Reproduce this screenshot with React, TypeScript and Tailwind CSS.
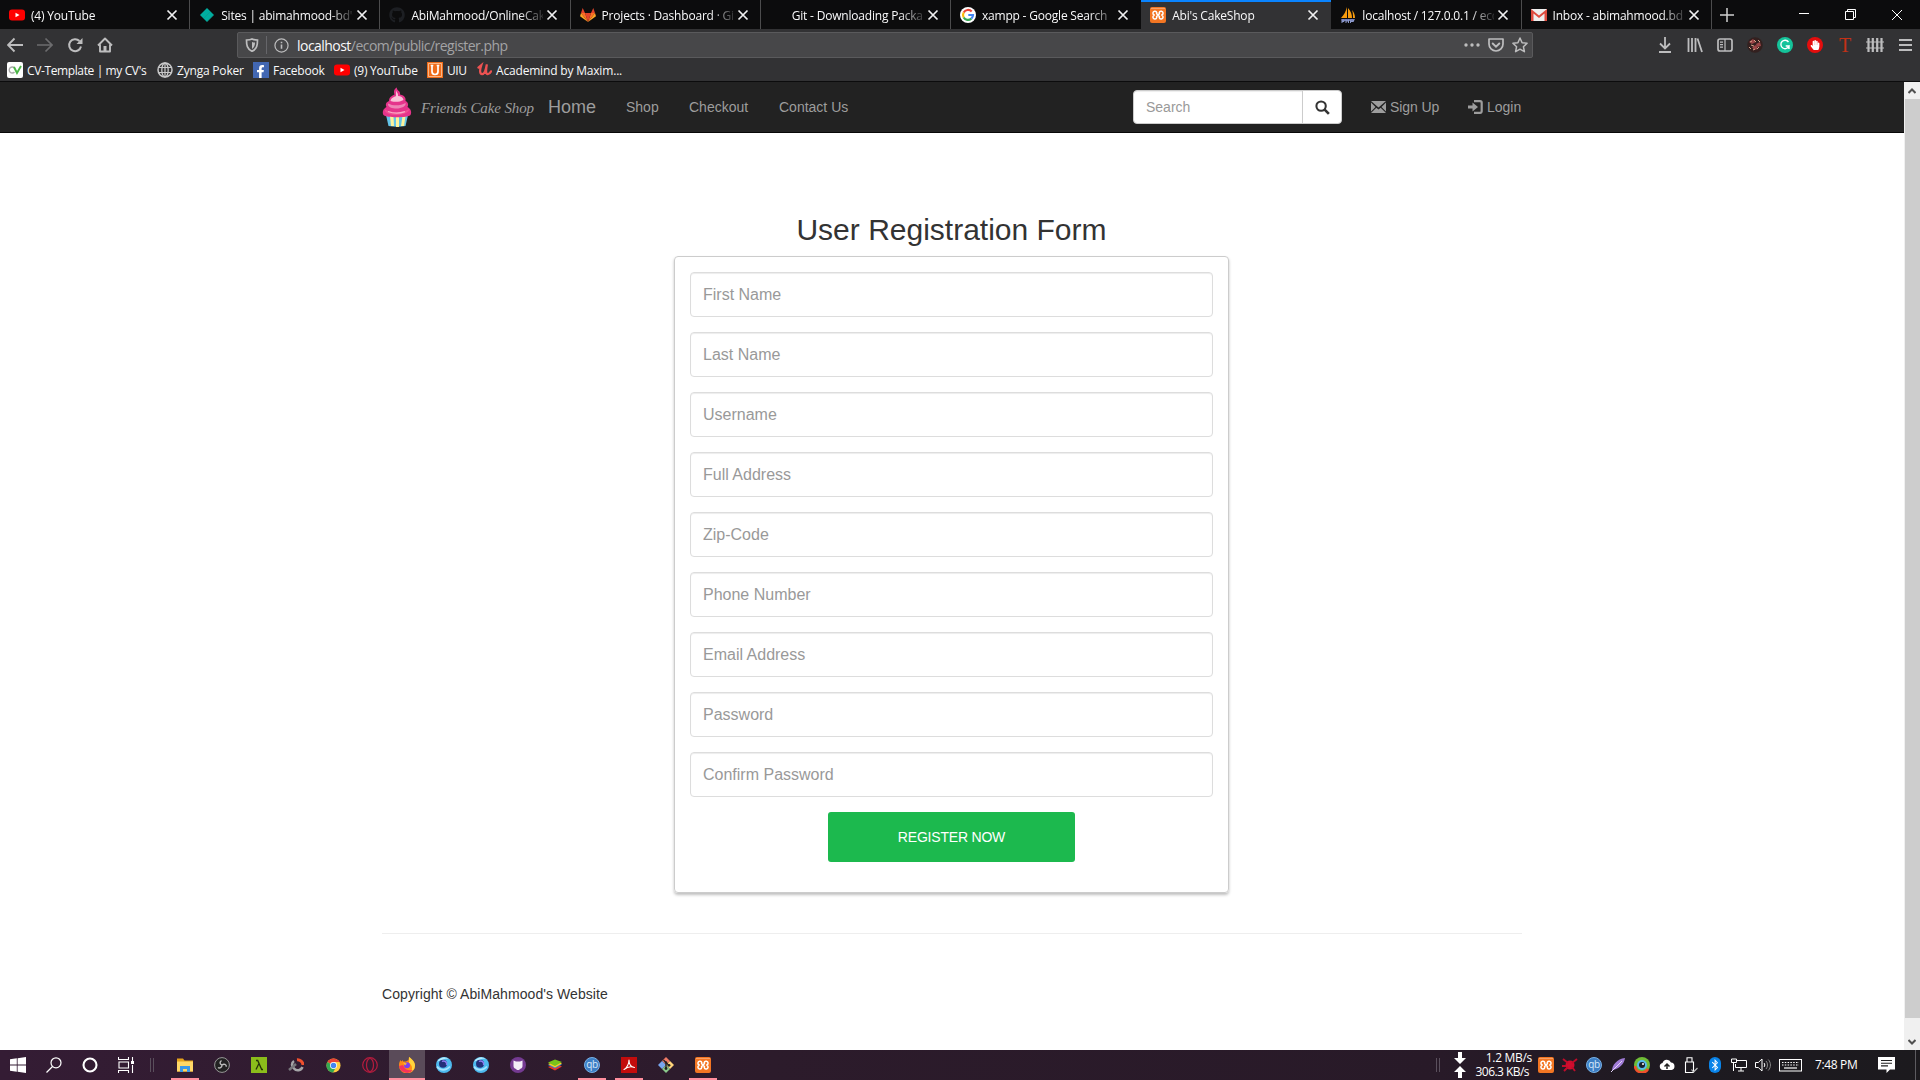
import React from "react";
import { FaGithub, FaBluetoothB, FaFacebookF, FaHandPaper } from "react-icons/fa";

type Kids = { children?: React.ReactNode };

function Svg({ w = 16, h, box, children }: Kids & { w?: number; h?: number; box?: string }) {
  return (
    <svg width={w} height={h ?? w} viewBox={box ?? "0 0 16 16"} fill="none" className="block shrink-0">
      {children}
    </svg>
  );
}

/* ---------- favicons ---------- */
const YouTube = () => (
  <Svg>
    <rect x="0" y="2.5" width="16" height="11" rx="3" fill="#f00" />
    <path d="M6.5 5.7v4.6l4-2.3z" fill="#fff" />
  </Svg>
);
const Diamond = () => (
  <Svg>
    <path d="M8 1l7 7-7 7-7-7z" fill="#00ad9f" />
    <path d="M5 11l6-6M8 14l6-6" stroke="#0b978d" strokeWidth=".6" />
  </Svg>
);
const Gitlab = () => (
  <Svg>
    <path d="M8 15L5 6h6z" fill="#e24329" />
    <path d="M8 15L5 6H1z M8 15l3-9h4z" fill="#fc6d26" />
    <path d="M8 15L1 6 0 9.2z M8 15l7-9 1 3.200z" fill="#fca326" />
    <path d="M1 6l1.700-5L5 6zM15 6l-1.700-5L11 6z" fill="#e24329" />
  </Svg>
);
const GoogleG = () => (
  <Svg>
    <circle cx="8" cy="8" r="8" fill="#fff" />
    <path d="M11.700 4.500A5 5 0 0 0 3.700 5.500" stroke="#ea4335" strokeWidth="2.200" />
    <path d="M3.700 5.500a5 5 0 0 0 0 5" stroke="#fbbc05" strokeWidth="2.200" />
    <path d="M3.700 10.500a5 5 0 0 0 7.600 1.200" stroke="#34a853" strokeWidth="2.200" />
    <path d="M11.300 11.700A5 5 0 0 0 13 8H8.300" stroke="#4285f4" strokeWidth="2.200" />
  </Svg>
);
const Xampp = () => (
  <Svg>
    <rect width="16" height="16" rx="2" fill="#f37623" />
    <path d="M1 1.500h14" stroke="#f9b384" strokeWidth=".7" />
    <path
      d="M6.700 6.300V5.500a1.600 1.600 0 0 0-1.600-1.300h-.5a1.900 1.900 0 0 0-.6 3.600v.6a1.900 1.900 0 0 0 .6 3.600h.5a1.600 1.600 0 0 0 1.600-1.300V9.800M9.300 6.300V5.500a1.600 1.600 0 0 1 1.600-1.300h.5a1.900 1.900 0 0 1 .6 3.600v.6a1.900 1.900 0 0 1-.6 3.600h-.5a1.600 1.600 0 0 1-1.600-1.300V9.800M6.200 6.300l3.600 3.600M9.800 6.300L6.200 9.900"
      stroke="#fff"
      strokeWidth="1.500"
    />
  </Svg>
);
const PhpMyAdmin = () => (
  <Svg>
    <path d="M7 0v11H1C4 8 6 4 7 0zM8 1c3 3 4 7 4 10H8zM12 3c2 2 3 5 3 8h-2c0-3 0-5-1-8z" fill="#f89c0e" />
    <path d="M1 12h14l-1 2H2z" fill="#6c78af" />
    <path d="M2 16v-3h2v1.500H2M6 12.500V16M6 14h2.500M8.500 12.500V16M10.500 16v-3h3v1.500h-3" stroke="#8d99cc" />
  </Svg>
);
const Gmail = () => (
  <Svg>
    <path d="M0 2h16v12H0z" fill="#eee" />
    <path d="M0 2l8 6.500L16 2v12h-2.500V6.500L8 11 2.500 6.500V14H0z" fill="#dd4b3e" />
  </Svg>
);

/* ---------- tab strip ---------- */
type Tab = { title: string; icon: React.ReactNode; active?: boolean; edge?: boolean };
const tabs: Tab[] = [
  { title: "(4) YouTube", icon: <YouTube />, edge: true },
  { title: "Sites | abimahmood-bd's", icon: <Diamond />, edge: true },
  { title: "AbiMahmood/OnlineCak", icon: <FaGithub className="size-4 text-[#1d1f23]" />, edge: true },
  { title: "Projects · Dashboard · Git", icon: <Gitlab />, edge: true },
  { title: "Git - Downloading Packa", icon: <span className="size-4" />, edge: true },
  { title: "xampp - Google Search", icon: <GoogleG /> },
  { title: "Abi's CakeShop", icon: <Xampp />, active: true },
  { title: "localhost / 127.0.0.1 / eco", icon: <PhpMyAdmin />, edge: true },
  { title: "Inbox - abimahmood.bd", icon: <Gmail />, edge: true },
];

function TabStrip() {
  return (
    <div className="flex h-[29px] bg-[#0c0c0d]">
      {tabs.map((t) => (
        <div
          key={t.title}
          className={
            "flex w-[190.2px] shrink-0 items-center pl-[9px] " +
            (t.active ? "border-t-2 border-[#0a84ff] bg-[#323234] pb-0.5 " : "pt-px ") +
            (t.edge ? "border-r border-r-[#4c4c4d]" : "")
          }
        >
          {t.icon}
          <span className="ml-1.5 w-[132px] overflow-hidden whitespace-nowrap pt-0.5 text-[12px] leading-5 tracking-[-0.2px] text-[#f9f9fa] [mask-image:linear-gradient(to_right,#000_108px,transparent_136px)]">
            {t.title}
          </span>
          <span className="ml-[3px]">
            <Svg w={12} box="0 0 12 12">
              <path d="M1.500 1.500l9 9M10.500 1.500l-9 9" stroke="#f0f0f1" strokeWidth="1.700" />
            </Svg>
          </span>
        </div>
      ))}
      <div className="flex flex-1 items-center pl-2">
        <Svg w={14} box="0 0 14 14">
          <path d="M7 0v14M0 7h14" stroke="#d0d0d0" strokeWidth="1.500" />
        </Svg>
        <div className="ml-auto flex items-center gap-[35px] pr-[17px]">
          <Svg w={11} box="0 0 11 11">
            <path d="M0 4.500h10" stroke="#fff" />
          </Svg>
          <Svg w={11} box="0 0 11 11">
            <path d="M.5 2.500h8v8h-8zM2.500 2.500v-2h8v8h-2" stroke="#fff" />
          </Svg>
          <Svg w={12} box="0 0 12 12">
            <path d="M1 1l10 10M11 1L1 11" stroke="#fff" />
          </Svg>
        </div>
      </div>
    </div>
  );
}

/* ---------- navigation toolbar ---------- */
function Slot({ children, w }: Kids & { w: string }) {
  return <span className={"flex shrink-0 items-center justify-center " + w}>{children}</span>;
}

function Toolbar() {
  const s = "#bdbdbe";
  return (
    <div className="flex h-[29px] items-start pt-[3px]">
      <div className="flex h-[26px] w-[237px] shrink-0 items-center">
        <Slot w="w-[30px]">
          <Svg>
            <path d="M16 8H1.500M7.500 1.500L1 8l6.500 6.500" stroke={s} strokeWidth="1.900" />
          </Svg>
        </Slot>
        <Slot w="w-[30px]">
          <Svg>
            <path d="M0 8h14.500M8.500 1.500L15 8l-6.500 6.500" stroke="#6c6c6e" strokeWidth="1.700" />
          </Svg>
        </Slot>
        <Slot w="w-[30px]">
          <Svg>
            <path d="M14 9.500A6 6 0 1 1 12.500 4" stroke={s} strokeWidth="2" />
            <path d="M15.500 1v6h-6z" fill={s} />
          </Svg>
        </Slot>
        <Slot w="w-[30px]">
          <Svg>
            <path d="M1 8.500L8 1.500l7 7M3 7.500v7h10v-7" stroke={s} strokeWidth="1.900" strokeLinejoin="round" />
            <path d="M6.500 9h3v5.500h-3z" fill={s} />
          </Svg>
        </Slot>
      </div>
      <div className="flex h-[26px] w-[1296px] shrink-0 items-center rounded-[2px] border border-[#5a5a5c] bg-[#474749]">
        <Slot w="w-[28px]">
          <Svg w={14} box="0 0 14 14">
            <path d="M7 1c2 1 4 1 5.500 1 0 5-.5 9-5.500 11.300C2 11 1.500 7 1.500 2 3 2 5 2 7 1z" stroke={s} strokeWidth="1.700" />
            <path d="M7 4c1 .5 2 .5 3 .5 0 3-.8 5-3 6.500z" fill={s} />
          </Svg>
        </Slot>
        <span className="h-[18px] w-px bg-[#66666a]" />
        <Slot w="w-[29px]">
          <Svg w={15}>
            <circle cx="8" cy="8" r="7" stroke={s} strokeWidth="1.300" />
            <path d="M8 7v4.500M8 4v1.700" stroke={s} strokeWidth="1.700" />
          </Svg>
        </Slot>
        <span className="pl-px pt-0.5 text-[14px] leading-6 tracking-[-0.54px] text-[#a3a3a5]">
          <span className="text-[#f9f9fa]">localhost</span>/ecom/public/register.php
        </span>
        <div className="ml-auto flex items-center">
          <Slot w="w-[24px]">
            <Svg>
              <circle cx="2" cy="8" r="1.700" fill={s} />
              <circle cx="8" cy="8" r="1.700" fill={s} />
              <circle cx="14" cy="8" r="1.700" fill={s} />
            </Svg>
          </Slot>
          <Slot w="w-[24px]">
            <Svg>
              <path d="M1 2h14v5a7 7 0 0 1-14 0z" stroke={s} strokeWidth="1.700" strokeLinejoin="round" />
              <path d="M4.700 6.500L8 9.700l3.300-3.200" stroke={s} strokeWidth="1.900" strokeLinecap="round" />
            </Svg>
          </Slot>
          <Slot w="w-[24px]">
            <Svg>
              <path d="M8 1l2.100 4.700 5 .5-3.700 3.500 1 5L8 12.200 3.600 14.700l1-5L.9 6.200l5-.5z" stroke={s} strokeWidth="1.500" strokeLinejoin="round" />
            </Svg>
          </Slot>
        </div>
      </div>
      <div className="flex h-[26px] flex-1 items-center justify-end">
        <Slot w="w-[30px]">
          <Svg>
            <path d="M8 0v11M3 6.500L8 11.500l5-5M2 15h12" stroke={s} strokeWidth="1.800" />
          </Svg>
        </Slot>
        <Slot w="w-[30px]">
          <Svg>
            <path d="M1.500 1v14M5 1v14M8.500 1v14M10.500 1.500L15 15" stroke={s} strokeWidth="1.800" />
          </Svg>
        </Slot>
        <Slot w="w-[30px]">
          <Svg>
            <rect x="1" y="2" width="14" height="12" rx="2" stroke={s} strokeWidth="1.700" />
            <path d="M8 2v12M3 5.200h3M3 7.700h3M3 10.200h3" stroke={s} strokeWidth="1.200" />
          </Svg>
        </Slot>
        <Slot w="w-[30px]">
          <Svg>
            <circle cx="8" cy="8" r="7.800" fill="#33201f" />
            <path d="M2 5l4-3 3 3-4 2zM9 7l4-2 1 4-4 1zM5 10l4-2 2 4-4 1z" fill="#9b4547" />
            <path d="M7 3l2 2M4 8l3 1M11 3l2 2M6 13l2-1M3 5l2-1M10 12l2-2M2 10l2 2" stroke="#d4a087" />
          </Svg>
        </Slot>
        <Slot w="w-[30px]">
          <Svg>
            <circle cx="8" cy="8" r="8" fill="#15c39a" />
            <path d="M11.500 5A4.200 4.200 0 1 0 12 9H8.700M12 8.500V12" stroke="#fff" strokeWidth="1.400" />
          </Svg>
        </Slot>
        <Slot w="w-[30px]">
          <span className="flex size-4 items-center justify-center rounded-full bg-[#e40d0d]">
            <FaHandPaper className="size-2.5 text-white" />
          </span>
        </Slot>
        <Slot w="w-[30px]">
          <span className="font-['Liberation_Serif',serif] text-[20px] leading-6 text-[#c33116]">T</span>
        </Slot>
        <Slot w="w-[30px]">
          <Svg w={18} h={16} box="0 0 18 16">
            <path d="M2.500 1v14M6.800 1v14M11.200 1v14M15.500 1v14" stroke={s} strokeWidth="2.200" />
            <path d="M0 5h18M0 11h18" stroke={s} strokeWidth="1.100" />
          </Svg>
        </Slot>
        <Slot w="w-[30px]">
          <Svg w={13} h={16} box="0 0 13 16">
            <path d="M0 3h13M0 8h13M0 13h13" stroke={s} strokeWidth="1.800" />
          </Svg>
        </Slot>
      </div>
    </div>
  );
}

const bookmarks = [
  {
    label: "CV-Template | my CV's",
    w: "w-[150px] tracking-[-0.38px]",
    icon: (
      <Svg>
        <rect width="16" height="16" rx="2" fill="#fff" />
        <path d="M7.500 6A3 3 0 1 0 7.500 10" stroke="#aaa" strokeWidth="1.400" />
        <path d="M7 5l3 6 4-7" stroke="#4cb648" strokeWidth="1.900" />
      </Svg>
    ),
  },
  {
    label: "Zynga Poker",
    w: "w-[96px] tracking-[-0.2px]",
    icon: (
      <Svg>
        <circle cx="8" cy="8" r="7" stroke="#c8c8c9" strokeWidth="1.500" />
        <ellipse cx="8" cy="8" rx="3.200" ry="7" stroke="#c8c8c9" strokeWidth="1.300" />
        <path d="M1.500 5.500h13M1.500 10.500h13M8 1v14" stroke="#c8c8c9" strokeWidth="1.200" />
      </Svg>
    ),
  },
  {
    label: "Facebook",
    w: "w-[81px] tracking-[-0.25px]",
    icon: (
      <span className="flex size-4 shrink-0 items-end justify-end bg-[#4267b2] pr-0.5">
        <FaFacebookF className="size-[13px] text-white" />
      </span>
    ),
  },
  { label: "(9) YouTube", w: "w-[93px] tracking-[-0.25px]", icon: <YouTube /> },
  {
    label: "UIU",
    w: "w-[50px] tracking-[-0.4px]",
    icon: (
      <Svg>
        <rect width="16" height="16" fill="#ef6c1a" />
        <path d="M1.500 1.500h13v13h-13z" stroke="#ffd9b8" strokeWidth=".7" />
        <path d="M5 3v6.500a3 3 0 0 0 6 0V3M3.700 3.500h2.600M9.700 3.500h2.600" stroke="#fff" strokeWidth="1.700" />
      </Svg>
    ),
  },
  {
    label: "Academind by Maxim...",
    w: "w-[200px] tracking-[-0.18px]",
    icon: (
      <Svg w={15}>
        <path d="M1.500 6l3-2.500C3 8 2.500 13 5.500 13c2.500 0 4-5 5-10.500C9.500 8 9 13 11.500 13c1.500 0 2.500-1 3.500-3" stroke="#ec5252" strokeWidth="2.400" strokeLinecap="round" />
      </Svg>
    ),
  },
];

function Bookmarks() {
  return (
    <div className="flex h-[23px] items-center pl-[7px]">
      {bookmarks.map((b) => (
        <div key={b.label} className={"flex shrink-0 items-center gap-1 whitespace-nowrap text-[12px] leading-4 text-[#f9f9fa] " + b.w}>
          {b.icon}
          <span className="pt-0.5">{b.label}</span>
        </div>
      ))}
    </div>
  );
}

/* ---------- page ---------- */
function Cupcake() {
  return (
    <Svg w={30} h={40} box="0 0 30 40">
      <path d="M4 28h22l-2.500 11a14 3 0 0 1-17 0z" fill="#63c4e8" />
      <path d="M8 29l1 10h3l-.5-10zM14 29h3v11h-3zM20.500 29h3l-1.500 10h-3z" fill="#fdf29a" />
      <path d="M15 .5c-1 3 4 3 3 7 5 1 6 4 5.500 6.500 3 1.500 3 4 2 6C29 22 30 25 28.500 28c-2 3-25 3-27 0C0 25 1 22 4.500 20c-1.500-3 0-5 2.500-6C7 10 10 9 12.500 7.500 11.500 4 12 2 15 .5z" fill="#e5348b" />
      <path d="M14 3c0 2 2.500 3 2 6 3 0 5 1.500 5.500 4-4 2-8 2.500-13 1C9 11 12 10 14 9z" fill="#f9c3d8" />
      <path d="M6 16.500c6 3 13 2 17.500-.5 1 3-4 5.500-9 5.500-4 0-9-1-8.500-5z" fill="#ee85b6" />
      <path d="M3 22.500c7 4 17 3.500 24-.5 1 2.500-5 6-12 6s-13-2-12-5.500z" fill="#f04f92" />
      <path d="M6 24.500c5 2 12 2 17 .2" stroke="#f9a9c8" strokeWidth="1.300" />
    </Svg>
  );
}

function SiteNav() {
  return (
    <nav className="h-[51px] border-b border-[#080808] bg-[#222]">
      <div className="mx-auto flex h-[50px] w-[1140px] items-center text-[14px] leading-5 text-[#9d9d9d]">
        <Cupcake />
        <span className="ml-[9px] w-[127px] whitespace-nowrap pt-0.5 font-['Liberation_Serif',serif] text-[15px] italic tracking-[-0.12px]">
          Friends Cake Shop
        </span>
        <span className="w-[78px] text-[18px]">Home</span>
        <span className="w-[63px]">Shop</span>
        <span className="w-[90px]">Checkout</span>
        <span>Contact Us</span>
        <div className="ml-auto flex h-[34px] w-[209px] overflow-hidden rounded-[4px] border border-[#ccc] bg-white">
          <div className="flex flex-1 items-center pl-3 text-[#999] shadow-[inset_0_1px_1px_rgba(0,0,0,0.075)]">Search</div>
          <div className="flex w-[39px] items-center justify-center border-l border-[#ccc]">
            <Svg w={15} h={15}>
              <circle cx="6.500" cy="6.500" r="5" stroke="#333" strokeWidth="2.200" />
              <path d="M10 10l4.800 4.800" stroke="#333" strokeWidth="2.800" />
            </Svg>
          </div>
        </div>
        <div className="ml-[29px] flex w-[97px] items-center gap-1">
          <Svg w={15} h={12} box="0 0 15 12">
            <path d="M0 0h15L7.500 6.500zM0 1.500L4.500 6 0 10.500zM15 1.500L10.500 6l4.500 4.500zM0 12l5.300-5.300L7.500 8.500l2.200-1.800L15 12z" fill="#9d9d9d" />
          </Svg>
          <span className="tracking-[-0.1px]">Sign Up</span>
        </div>
        <div className="flex w-[54px] items-center gap-1 whitespace-nowrap">
          <Svg w={15} h={14} box="0 0 15 14">
            <path d="M6 1.200h6.200a1.500 1.500 0 0 1 1.500 1.500v8.600a1.500 1.500 0 0 1-1.500 1.500H6" stroke="#9d9d9d" strokeWidth="2.200" />
            <path d="M0 5.500h4.500V2.500L10 7l-5.500 4.500v-3H0z" fill="#9d9d9d" />
          </Svg>
          <span>Login</span>
        </div>
      </div>
    </nav>
  );
}

const fields = ["First Name", "Last Name", "Username", "Full Address", "Zip-Code", "Phone Number", "Email Address", "Password", "Confirm Password"];

function Page() {
  return (
    <main className="w-[1904px] bg-white font-['Liberation_Sans',Arial,sans-serif] text-[#333]">
      <SiteNav />
      <h2 className="mt-[80px] pr-px text-center text-[30px] leading-[33px]">User Registration Form</h2>
      <form className="ml-[674px] mt-2.5 h-[637px] w-[555px] rounded-[4px] border border-[#ccc] p-[15px] shadow-[0_2px_3px_rgba(0,0,0,0.25)]">
        <div className="flex flex-col gap-[15px]">
          {fields.map((f) => (
            <div key={f} className="flex h-[45px] items-center rounded-[4px] border border-[#ddd] pl-3 text-[16px] text-[#999] shadow-[inset_0_1px_1px_rgba(0,0,0,0.075)]">
              {f}
            </div>
          ))}
        </div>
        <div className="mx-auto mt-[15px] flex h-[50px] w-[247px] items-center justify-center rounded-[3px] bg-[#1cb94e] text-[14px] tracking-[-0.2px] text-white">
          REGISTER NOW
        </div>
      </form>
      <footer className="mx-auto mt-10 w-[1140px] border-t border-[#eee] pt-[50px] text-[14px] leading-5 tracking-[0.07px]">
        Copyright © AbiMahmood's Website
      </footer>
    </main>
  );
}

function Scrollbar() {
  return (
    <div className="flex w-4 flex-col items-center justify-between bg-[#f0f0f0]">
      <div className="flex h-[17px] items-center">
        <Svg w={8} h={6} box="0 0 8 6">
          <path d="M.5 5L4 1.500 7.500 5" stroke="#505050" strokeWidth="2" />
        </Svg>
      </div>
      <div className="mb-[15px] w-[15px] flex-1 bg-[#cdcdcd]" />
      <div className="flex h-[17px] items-center">
        <Svg w={8} h={6} box="0 0 8 6">
          <path d="M.5 1L4 4.500 7.500 1" stroke="#505050" strokeWidth="2" />
        </Svg>
      </div>
    </div>
  );
}

/* ---------- taskbar ---------- */
const Swirl = () => (
  <Svg>
    <circle cx="8" cy="8" r="8" fill="#4db9ee" />
    <path d="M1 4.500A8 8 0 0 1 13 2c-3-.5-5 0-6 1z" fill="#b5ecff" />
    <circle cx="7" cy="6.800" r="4" fill="#233079" />
    <path d="M6 4.500a3 3 0 0 1 4.500 3.500" stroke="#8f7df0" strokeWidth="1.400" />
    <path d="M1 9.500c3 4.500 9 4.500 13 0" stroke="#a4e4ff" strokeWidth="1.700" />
  </Svg>
);
const Qb = () => (
  <span className="flex size-4 shrink-0 items-center justify-center rounded-full border border-[#78b0e4] bg-[#3d7ec4] text-[10px] leading-3 tracking-tight text-[#d7e9fa]">
    <span className="pb-0.5">qb</span>
  </span>
);

type TaskApp = { name: string; icon: React.ReactNode; open?: boolean; focused?: boolean };
const apps: TaskApp[] = [
  {
    name: "explorer",
    open: true,
    icon: (
      <Svg>
        <path d="M0 1.500h6l1.500 2H16v11H0z" fill="#e5a21b" />
        <path d="M0 4.500h16v10H0z" fill="#ffd767" />
        <path d="M3 15V9h10v6h-3v-3H6v3z" fill="#3a98e8" />
      </Svg>
    ),
  },
  {
    name: "obs",
    icon: (
      <Svg>
        <circle cx="8" cy="8" r="7.400" fill="#222" stroke="#999" strokeWidth="1" />
        <path d="M8 8C5.500 7 5.500 5 7.500 3.500M8 8c2-1.500 4.500-.5 4.300 1.800M8 8c0 2.500-2.500 3.700-4 2.500" stroke="#bbb" strokeWidth="1.400" />
      </Svg>
    ),
  },
  {
    name: "lambda",
    icon: (
      <Svg>
        <rect width="16" height="16" fill="#8bbd1b" />
        <path d="M5 3.500h1.700l4 9H12M7.700 7L5 12.500" stroke="#243209" strokeWidth="1.300" />
      </Svg>
    ),
  },
  {
    name: "gauge",
    icon: (
      <Svg>
        <path d="M9 2.700A5.500 5.500 0 0 1 15 8" stroke="#f0502e" strokeWidth="3" />
        <path d="M14.500 10A5 5 0 0 1 6 11.500 4.500 4.500 0 0 1 6 4" stroke="#a5a5a8" strokeWidth="2.500" />
        <path d="M8 7L1 13" stroke="#77777b" strokeWidth="2.500" />
      </Svg>
    ),
  },
  {
    name: "chrome",
    icon: (
      <Svg w={15}>
        <circle cx="8" cy="8" r="7.500" fill="#ffcd40" />
        <path d="M8 8L1.500 4.200A7.500 7.500 0 0 1 14.500 4.200H8z" fill="#ea4335" />
        <path d="M1.500 4.200A7.500 7.500 0 0 0 7.500 15.500L10.500 10 8 8z" fill="#34a853" />
        <circle cx="8" cy="8" r="3.700" fill="#fff" />
        <circle cx="8" cy="8" r="2.900" fill="#4285f4" />
      </Svg>
    ),
  },
  {
    name: "opera",
    icon: (
      <Svg>
        <circle cx="8" cy="8" r="7.300" stroke="#b51c3e" strokeWidth="1.200" />
        <ellipse cx="8" cy="8" rx="3.500" ry="6.500" stroke="#b51c3e" strokeWidth="1.200" />
      </Svg>
    ),
  },
  {
    name: "firefox",
    open: true,
    focused: true,
    icon: (
      <Svg>
        <path d="M1.500 3l1 1.500L4 3v1.500h3L9.500 3 10 0c3 2 6 5 6 8.500a7.700 7.700 0 0 1-16 0C0 6 .5 5 1.500 3z" fill="#ff8a16" />
        <path d="M10 0c3 2 6 5 6 8.500A7.700 7.700 0 0 1 12 15c2-4 1-7-2-9V0z" fill="#ffd53c" />
        <path d="M0 9a8 8 0 0 0 14 4c-4 1-8 0-10-5z" fill="#f7345b" />
        <circle cx="8" cy="8.300" r="3" fill="#7b3ff0" />
        <path d="M4 5.500l4 1-2 2z" fill="#ffbb27" />
      </Svg>
    ),
  },
  { name: "swirl-a", icon: <Swirl /> },
  { name: "swirl-b", icon: <Swirl /> },
  {
    name: "github",
    icon: (
      <Svg>
        <circle cx="8" cy="8" r="8" fill="#743a91" />
        <path d="M3.500 3.500l2.500 1h4l2.500-1v5.700c0 2-2 2.800-4.500 2.800s-4.500-.8-4.500-2.800z" fill="#f3eef7" />
        <path d="M6.500 11.500h3V13h-3z" fill="#f3eef7" />
      </Svg>
    ),
  },
  {
    name: "stacks",
    icon: (
      <Svg>
        <path d="M1 10l8-3 6 2.500-7 4z" fill="#e5382a" />
        <path d="M1 8l8-3 6 2.500-7 4z" fill="#2f87d8" />
        <path d="M1 7l8-3 6 2.500-7 4z" fill="#fdd023" />
        <path d="M1 5.500l7-3 7 2.500-7 4z" fill="#79c31b" />
      </Svg>
    ),
  },
  { name: "qb", icon: <Qb />, open: true },
  {
    name: "acrobat",
    open: true,
    icon: (
      <Svg>
        <rect width="16" height="16" fill="#c30c0c" />
        <path d="M3 12.500c3-1.500 5-6 5-9.500 0 4 2 7 5.500 7.500C10 9 6 10 3 12.500z" stroke="#fff" strokeWidth="1.100" strokeLinejoin="round" />
      </Svg>
    ),
  },
  {
    name: "git",
    icon: (
      <Svg>
        <path d="M8 0l4 4-4 4-4-4z" fill="#ef7b66" />
        <path d="M12 4l4 4-4 4-4-4z" fill="#ffd47a" />
        <path d="M4 4l4 4-4 4-4-4z" fill="#78a6ee" />
        <path d="M8 8l4 4-4 4-4-4z" fill="#8ac98b" />
        <path d="M5.500 3l5 5M8 5.500V12" stroke="#222" strokeWidth="1.300" />
        <circle cx="8" cy="5.500" r="1.200" fill="#222" />
        <circle cx="8" cy="11.500" r="1.400" fill="#222" />
        <circle cx="11" cy="8.300" r="1.400" fill="#222" />
      </Svg>
    ),
  },
  { name: "xampp", icon: <Xampp />, open: true },
];

function Grip() {
  return (
    <Svg w={4} h={14} box="0 0 4 14">
      <path d="M.5 0v14M3.500 0v14" stroke="#5a4f5c" />
    </Svg>
  );
}

function Taskbar() {
  return (
    <div className="flex h-[30px] items-center bg-[linear-gradient(to_right,#341c34,#2c1b2b_40%,#281a28_75%,#1d1a20_88%,#1c1a1e)] font-['Open_Sans',sans-serif]">
      <Slot w="w-[36px]">
        <Svg>
          <path d="M0 2.300L6.800 1.300v6.200H0zM7.600 1.200L16 0v7.500H7.600zM0 8.400h6.800v6.300L0 13.700zM7.600 8.400H16V16l-8.400-1.200z" fill="#fff" />
        </Svg>
      </Slot>
      <Slot w="w-[36px]">
        <Svg>
          <circle cx="10" cy="5.800" r="5" stroke="#fff" strokeWidth="1.200" />
          <path d="M6.500 9.500L.5 15.500" stroke="#fff" strokeWidth="1.200" />
        </Svg>
      </Slot>
      <Slot w="w-[36px]">
        <Svg>
          <circle cx="8" cy="8" r="6.500" stroke="#fff" strokeWidth="2.100" />
        </Svg>
      </Slot>
      <Slot w="w-[36px]">
        <Svg>
          <path d="M.5 0v2.500h10V0M.5 16v-2.500h10V16M1 5h9.500v6H1zM14.500 0v4M14.500 8v8" stroke="#fff" strokeWidth="1.100" />
          <path d="M13 4h3v3h-3z" fill="#fff" />
        </Svg>
      </Slot>
      <Slot w="w-[15px]">
        <Grip />
      </Slot>
      <div className="ml-[7.5px] flex">
        {apps.map((a) => (
          <div key={a.name} className="flex h-[30px] w-[37px] flex-col items-center">
            <div className={"flex h-7 items-center justify-center pt-[2px] " + (a.focused ? "w-9 bg-[#5a4b59]" : "w-7")}>{a.icon}</div>
            <div className={"h-0.5 " + (a.open ? "bg-[#ff8f9e] " : "") + (a.focused ? "w-9" : "w-7")} />
          </div>
        ))}
      </div>
      <div className="ml-auto flex items-center text-white">
        <Grip />
        <Slot w="w-[40px]">
          <Svg w={12} h={26} box="0 0 12 26">
            <path d="M4 0h4v6h4l-6 6-6-6h4zM4 26h4v-6h4l-6-6-6 6h4z" fill="#fff" />
          </Svg>
        </Slot>
        <div className="flex w-[54px] flex-col items-end text-[12px] leading-[14px] whitespace-nowrap">
          <span className="pr-0.5 tracking-[-0.3px]">1.2 MB/s</span>
          <span className="pr-[5px] tracking-[-0.55px]">306.3 KB/s</span>
        </div>
        <Slot w="w-[24px]">
          <Xampp />
        </Slot>
        <Slot w="w-[24px]">
          <Svg>
            <circle cx="8" cy="8" r="4.500" fill="#d00d2e" />
            <path d="M1 2l5 4M15 2l-5 4M2 14l4-4M13 14l-3-4M0 9h4" stroke="#c00c2a" strokeWidth="1.900" />
          </Svg>
        </Slot>
        <Slot w="w-[24px]">
          <Qb />
        </Slot>
        <Slot w="w-[24px]">
          <Svg>
            <path d="M2 14C2 8 7 2 15 1c-1 6-5 10-12 12z" fill="#a07bd6" />
            <path d="M1 15L12 4" stroke="#e4d6fa" />
          </Svg>
        </Slot>
        <Slot w="w-[24px]">
          <Svg>
            <circle cx="8" cy="8" r="8" fill="#70bd37" />
            <path d="M1 9a7 7 0 0 0 13 3" stroke="#f0502b" strokeWidth="2.500" />
            <circle cx="8" cy="8" r="5" fill="#57bbed" />
            <circle cx="8" cy="8" r="3" fill="#17202c" />
            <circle cx="9" cy="7" r="1" fill="#fff" />
          </Svg>
        </Slot>
        <Slot w="w-[25px]">
          <Svg w={16} h={12} box="0 0 16 12">
            <path d="M4 11a3.500 3.500 0 0 1-.5-6.900A4.500 4.500 0 0 1 12 3.500 3.800 3.800 0 0 1 12.500 11z" fill="#fff" />
            <path d="M8 10V5.500M5.500 7.500L8 5l2.500 2.500" stroke="#222" strokeWidth="1.500" />
          </Svg>
        </Slot>
        <Slot w="w-[24px]">
          <Svg w={14} h={17} box="0 0 14 17">
            <path d="M3 5V.8h5V5M1.500 5h8v10.500h-8z" stroke="#fff" strokeWidth="1.100" />
            <path d="M7.500 12.500l2 2.500L13.500 11" stroke="#bbb" strokeWidth="1.200" />
          </Svg>
        </Slot>
        <Slot w="w-[24px]">
          <span className="flex h-4 w-3 items-center justify-center rounded-[6px] bg-[#0a84e9]">
            <FaBluetoothB className="size-3 text-white" />
          </span>
        </Slot>
        <Slot w="w-[24px]">
          <Svg w={16} h={14} box="0 0 16 14">
            <path d="M6 2.500h9.500v7H4.500V6M10 9.500V13M7 13h6M.5 1h5v3.500h-5zM2.500 5v8" stroke="#fff" />
          </Svg>
        </Slot>
        <Slot w="w-[24px]">
          <Svg>
            <path d="M.5 5.500h2.800L7 2v12l-3.700-3.500H.5z" stroke="#fff" />
            <path d="M9 6c1 1 1 3 0 4" stroke="#fff" />
            <path d="M11 4c2 2 2 6 0 8M13.200 2.500c3 3 3 8 0 11" stroke="#888" />
          </Svg>
        </Slot>
        <Slot w="w-[31px]">
          <Svg w={23} h={14} box="0 0 23 14">
            <rect x=".5" y="1.500" width="22" height="11.500" stroke="#fff" />
            <path d="M3 4.500h17M3 7h17" stroke="#fff" strokeWidth="1.200" strokeDasharray="1.500 1.300" />
            <path d="M5 10h13" stroke="#fff" strokeWidth="1.200" />
          </Svg>
        </Slot>
        <span className="ml-[9px] w-[63px] whitespace-nowrap text-[12px] leading-4 tracking-[-0.35px]">7:48 PM</span>
        <Svg w={17} h={16} box="0 0 17 16">
          <path d="M0 0h17v12.500h-5L8.500 16V12.500H0z" fill="#fff" />
          <path d="M3 3.500h11M3 6.200h11M3 8.900h7" stroke="#222" strokeWidth="1.100" />
        </Svg>
        <span className="ml-5 mr-1 h-[30px] w-px bg-[#5d5b60]" />
      </div>
    </div>
  );
}

export default function App() {
  return (
    <div className="flex h-[1080px] w-[1920px] flex-col overflow-hidden bg-white">
      <div className="h-[82px] shrink-0 border-b border-[#0c0c0d] bg-[#323234] font-['Open_Sans',sans-serif]">
        <TabStrip />
        <Toolbar />
        <Bookmarks />
      </div>
      <div className="flex min-h-0 flex-1">
        <Page />
        <Scrollbar />
      </div>
      <Taskbar />
    </div>
  );
}
